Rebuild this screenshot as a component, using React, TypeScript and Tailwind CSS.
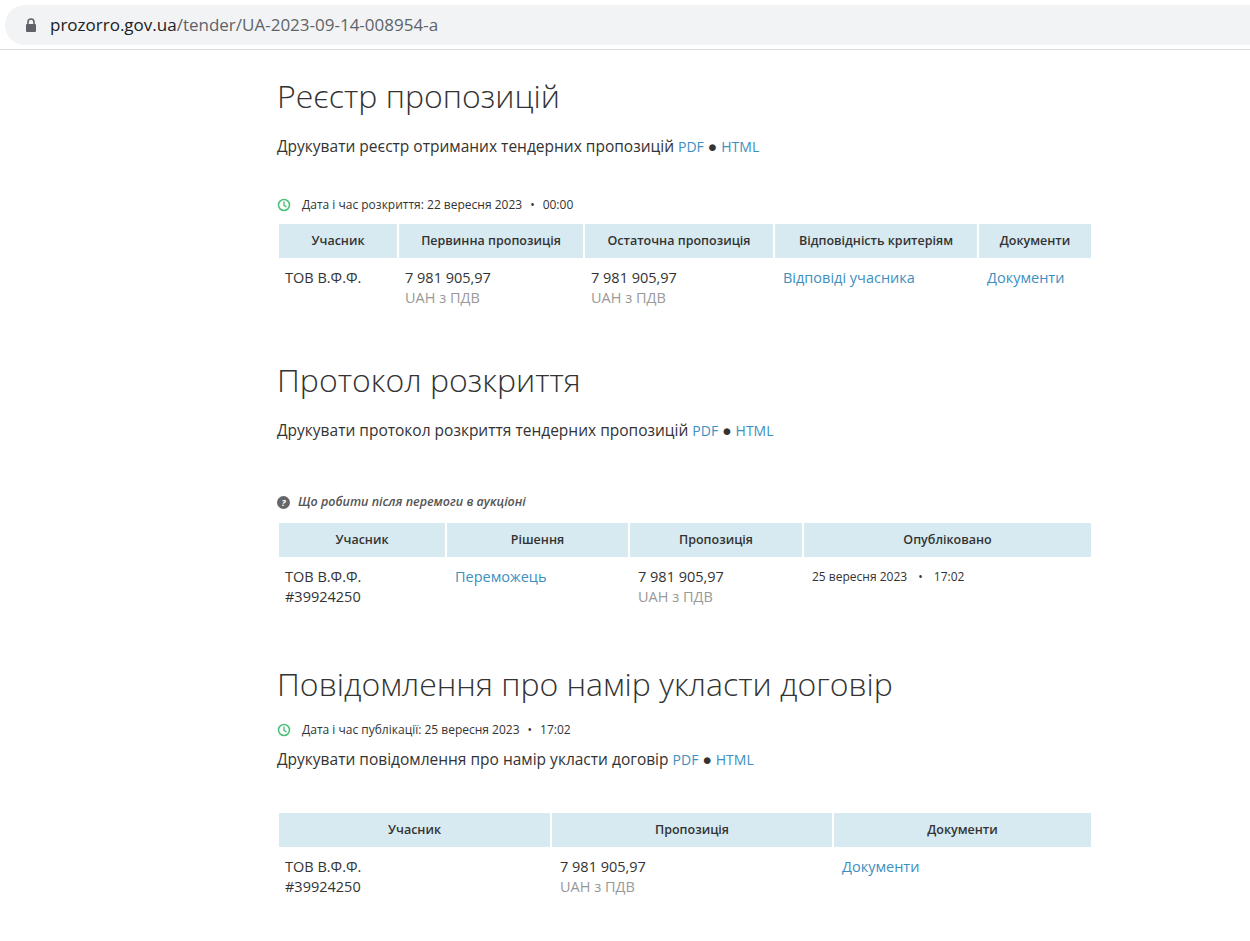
import React from "react";

const link = "text-[#3d8fc0]";
const Clock = () => (
  <svg width="14" height="14" viewBox="0 0 16 16" className="mr-[11px]"><circle cx="8" cy="8" r="6.3" fill="none" stroke="#4cc07a" strokeWidth="1.8"/><path d="M8 4.5V8.3l2.3 1.6" fill="none" stroke="#4cc07a" strokeWidth="1.6" strokeLinecap="round"/></svg>
);
const Th = ({ children }: { children: React.ReactNode }) => (
  <th className="bg-[#d7eaf1] h-[34px] text-[12.5px] font-semibold text-[#333] text-center align-middle">{children}</th>
);
const Price = () => (
  <div><div className="text-[#333]">7 981 905,97</div><div className="text-[#999]">UAH з ПДВ</div></div>
);
const base = "align-top pt-[8px] px-[6px] leading-[20px]";
const td = base + " text-[14.5px] text-[#333]";
const tdl = base + " text-[14.5px] " + link;
const title = "text-[32px] font-light text-[#333] leading-[46px]";
const pr = "text-[15.5px] text-[#333] leading-[20px]";

export default function App() {
  return (
    <div className="w-[1250px] h-[941px] bg-white overflow-hidden" style={{ fontFamily: '"Open Sans", sans-serif' }}>
      <div className="h-[50px] border-b border-[#dadce0] flex items-center pl-[5px]">
        <div className="flex-1 h-[40px] bg-[#f1f3f4] rounded-l-full flex items-center pl-[20px]">
          <svg width="12" height="14" viewBox="0 0 12 14"><path d="M3 6V4a3 3 0 0 1 6 0v2" fill="none" stroke="#5f6368" strokeWidth="1.6"/><rect x="1" y="6" width="10" height="8" rx="1" fill="#5f6368"/></svg>
          <span className="ml-[13px] text-[17px] text-[#202124]">prozorro.gov.ua<span className="text-[#5f6368]">/tender/UA-2023-09-14-008954-a</span></span>
        </div>
      </div>
      <div className="pl-[277px] w-[1093px]">
        <h1 className={title + " mt-[23px]"}>Реєстр пропозицій</h1>
        <p className={pr + " mt-[17px]"}>Друкувати реєстр отриманих тендерних пропозицій <span className={link + " text-[14px]"}>PDF</span> ● <span className={link + " text-[14px]"}>HTML</span></p>
        <div className="flex items-center text-[12px] text-[#333] mt-[39px] h-[18px]"><Clock/>Дата і час розкриття: 22 вересня 2023 <span className="mx-[8px]">•</span> 00:00</div>
        <table className="w-[816px] border-separate border-spacing-[2px] mt-[8px]">
          <thead><tr><Th>Учасник</Th><Th>Первинна пропозиція</Th><Th>Остаточна пропозиція</Th><Th>Відповідність критеріям</Th><Th>Документи</Th></tr></thead>
          <tbody><tr className="h-[60px]">
            <td className={td + " w-[118px]"}>ТОВ В.Ф.Ф.</td>
            <td className={td + " w-[184px]"}><Price/></td>
            <td className={td + " w-[188px]"}><Price/></td>
            <td className={tdl + " w-[202px] pl-[8px]"}>Відповіді учасника</td>
            <td className={tdl + " pl-[8px]"}>Документи</td>
          </tr></tbody>
        </table>
        <h1 className={title + " mt-[35px]"}>Протокол розкриття</h1>
        <p className={pr + " mt-[17px]"}>Друкувати протокол розкриття тендерних пропозицій <span className={link + " text-[14px]"}>PDF</span> ● <span className={link + " text-[14px]"}>HTML</span></p>
        <div className="flex items-center text-[12.5px] italic font-semibold text-[#555] mt-[51px] h-[20px]">
          <svg width="13" height="13" viewBox="0 0 16 16" className="mr-[8px]"><circle cx="8" cy="8" r="8" fill="#666"/><text x="8" y="12" fontSize="11" fontWeight="bold" textAnchor="middle" fill="white" fontFamily="Open Sans">?</text></svg>
          Що робити після перемоги в аукціоні</div>
        <table className="w-[816px] border-separate border-spacing-[2px] mt-[9px]">
          <thead><tr><Th>Учасник</Th><Th>Рішення</Th><Th>Пропозиція</Th><Th>Опубліковано</Th></tr></thead>
          <tbody><tr className="h-[60px]">
            <td className={td + " w-[166px]"}>ТОВ В.Ф.Ф.<br/>#39924250</td>
            <td className={tdl + " w-[181px] pl-[8px]"}>Переможець</td>
            <td className={td + " w-[172px] pl-[8px]"}><Price/></td>
            <td className={base + " pl-[8px] text-[12px] text-[#333]"}>25 вересня 2023 <span className="mx-[8px]">•</span> 17:02</td>
          </tr></tbody>
        </table>
        <h1 className={title + " mt-[40px]"}>Повідомлення про намір укласти договір</h1>
        <div className="flex items-center text-[12px] text-[#333] mt-[14px] h-[18px]"><Clock/>Дата і час публікації: 25 вересня 2023 <span className="mx-[8px]">•</span> 17:02</div>
        <p className={pr + " mt-[10px]"}>Друкувати повідомлення про намір укласти договір <span className={link + " text-[14px]"}>PDF</span> ● <span className={link + " text-[14px]"}>HTML</span></p>
        <table className="w-[816px] border-separate border-spacing-[2px] mt-[41px]">
          <thead><tr><Th>Учасник</Th><Th>Пропозиція</Th><Th>Документи</Th></tr></thead>
          <tbody><tr className="h-[60px]">
            <td className={td + " w-[271px]"}>ТОВ В.Ф.Ф.<br/>#39924250</td>
            <td className={td + " w-[280px] pl-[8px]"}><Price/></td>
            <td className={tdl + " pl-[8px]"}>Документи</td>
          </tr></tbody>
        </table>
      </div>
    </div>
  );
}
